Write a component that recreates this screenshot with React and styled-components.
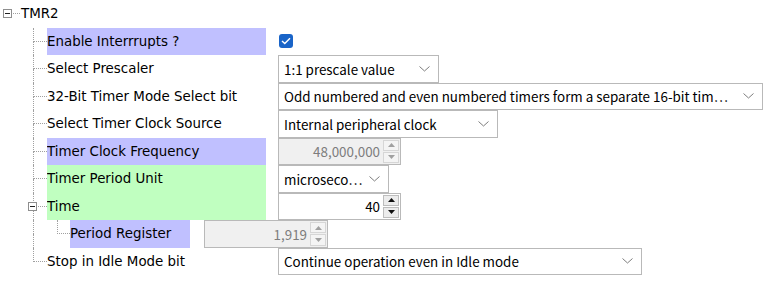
import React from "react";
import styled, { createGlobalStyle } from "styled-components";

const Global = createGlobalStyle`
  html, body { margin: 0; padding: 0; background: #ffffff; }
  body { font-family: "DejaVu Sans", Verdana, sans-serif; }
`;

const BLUE = "#c0c0ff";
const GREEN = "#c0ffc0";
const LINE = "#a0a0a0";

const Tree = styled.div`
  width: 773px;
  height: 294px;
  display: flex;
  flex-direction: column;
`;

const Row = styled.div`
  display: flex;
  height: 27.5px;
  align-items: stretch;
`;

const RootRow = styled(Row)`
  align-items: center;
  padding-left: 3px;
`;

const ExpandBox = styled.span`
  width: 9px;
  height: 9px;
  box-sizing: border-box;
  border: 1px solid #8e8e8e;
  background: #fff;
  display: flex;
  align-items: center;
  justify-content: center;
  flex-shrink: 0;
  &::after {
    content: "";
    width: 5px;
    height: 1px;
    background: #222;
  }
`;

const Dash = styled.span`
  width: 7px;
  height: 0;
  border-top: 1px dotted ${LINE};
  margin: 0 1px;
`;

const RootText = styled.span`
  font-size: 13.4px;
  color: #000;
`;

const Gutter = styled.div`
  display: flex;
  flex-shrink: 0;
  padding-left: 33px;
`;

const Segment = styled.div`
  position: relative;
  width: ${(p) => p.$w}px;
  display: flex;
  flex-direction: column;
`;

const SegTop = styled.div`
  flex: 1;
  border-left: 1px dotted ${LINE};
  border-bottom: ${(p) => (p.$arm ? `1px dotted ${LINE}` : "none")};
`;

const SegBottom = styled.div`
  flex: 1;
  border-left: ${(p) => (p.$open ? `1px dotted ${LINE}` : "1px solid transparent")};
`;

const SegBox = styled(ExpandBox)`
  position: absolute;
  left: -5px;
  top: 9px;
`;

const Label = styled.div`
  width: ${(p) => p.$w}px;
  flex-shrink: 0;
  background: ${(p) => p.$bg || "transparent"};
  display: flex;
  align-items: center;
  font-size: 13.4px;
  color: #000;
  white-space: nowrap;
  overflow: hidden;
`;

const Cell = styled.div`
  margin-left: ${(p) => p.$ml}px;
  display: flex;
  align-items: center;
`;

const SelectBox = styled.div`
  width: ${(p) => p.$w}px;
  height: 27.5px;
  box-sizing: border-box;
  border: 1px solid #b9b9b9;
  background: #fff;
  display: flex;
  align-items: center;
  padding: 0 8px 0 5px;
  font-family: "Noto Sans CJK JP", "Liberation Sans", sans-serif;
  font-size: 13.4px;
  color: #000;
`;

const SelectText = styled.span`
  flex: 1;
  white-space: nowrap;
  overflow: hidden;
`;

const Spin = styled.div`
  width: ${(p) => p.$w}px;
  height: 27.5px;
  box-sizing: border-box;
  border: 1px solid #b9b9b9;
  background: ${(p) => (p.$disabled ? "#f0f0f0" : "#fff")};
  display: flex;
  align-items: stretch;
  font-family: "Noto Sans CJK JP", "Liberation Sans", sans-serif;
  font-size: 13.4px;
  color: ${(p) => (p.$disabled ? "#7d7d7d" : "#000")};
`;

const SpinValue = styled.span`
  flex: 1;
  display: flex;
  align-items: center;
  justify-content: flex-end;
  padding-right: 3px;
`;

const SpinButtons = styled.div`
  width: 16px;
  display: flex;
  flex-direction: column;
  padding: 1px 1px 1px 0;
`;

const SpinBtn = styled.div`
  flex: 1;
  border: 1px solid ${(p) => (p.$disabled ? "#d6d6d6" : "#bdbdbd")};
  background: ${(p) => (p.$disabled ? "#f4f4f4" : "#ececec")};
  display: flex;
  align-items: center;
  justify-content: center;
  & + & { margin-top: 1px; }
`;

const CheckBox = styled.div`
  width: 14px;
  height: 14px;
  border-radius: 3px;
  background: #1964c8;
  margin-left: 1px;
  display: flex;
  align-items: center;
  justify-content: center;
`;

const Chevron = () => (
  <svg width="11" height="6" viewBox="0 0 11 6">
    <path d="M0.5 0.5 L5.5 5 L10.5 0.5" fill="none" stroke="#7e7e7e" strokeWidth="1" />
  </svg>
);

const Tri = ({ up, color }) => (
  <svg width="7" height="4" viewBox="0 0 7 4">
    <path d={up ? "M0 4 L3.5 0 L7 4 Z" : "M0 0 L3.5 4 L7 0 Z"} fill={color} />
  </svg>
);

const Select = ({ w, text }) => (
  <SelectBox $w={w}>
    <SelectText>{text}</SelectText>
    <Chevron />
  </SelectBox>
);

const SpinBox = ({ w, value, disabled }) => {
  const c = disabled ? "#a0a0a0" : "#111";
  return (
    <Spin $w={w} $disabled={disabled}>
      <SpinValue>{value}</SpinValue>
      <SpinButtons>
        <SpinBtn $disabled={disabled}><Tri up color={c} /></SpinBtn>
        <SpinBtn $disabled={disabled}><Tri color={c} /></SpinBtn>
      </SpinButtons>
    </Spin>
  );
};

const Check = () => (
  <CheckBox>
    <svg width="10" height="8" viewBox="0 0 10 8">
      <path d="M1 4 L3.8 6.6 L9 1.2" fill="none" stroke="#fff" strokeWidth="1.4" />
    </svg>
  </CheckBox>
);

const rows = [
  { label: "Enable Interrrupts ?", bg: BLUE, ctrl: <Check /> },
  { label: "Select Prescaler", ctrl: <Select w={161} text="1:1 prescale value" /> },
  {
    label: "32-Bit Timer Mode Select bit",
    ctrl: <Select w={485} text="Odd numbered and even numbered timers form a separate 16-bit tim…" />,
  },
  { label: "Select Timer Clock Source", ctrl: <Select w={220} text="Internal peripheral clock" /> },
  { label: "Timer Clock Frequency", bg: BLUE, ctrl: <SpinBox w={123} value="48,000,000" disabled /> },
  { label: "Timer Period Unit", bg: GREEN, ctrl: <Select w={111} text="microseco…" /> },
  { label: "Time", bg: GREEN, box: true, ctrl: <SpinBox w={123} value="40" /> },
  { child: true, label: "Period Register", bg: BLUE, ctrl: <SpinBox w={124} value="1,919" disabled /> },
  { label: "Stop in Idle Mode bit", last: true, ctrl: <Select w={364} text="Continue operation even in Idle mode" /> },
];

export default function App() {
  return (
    <>
      <Global />
      <Tree>
        <RootRow>
          <ExpandBox />
          <Dash />
          <RootText>TMR2</RootText>
        </RootRow>
        {rows.map((r, i) =>
          r.child ? (
            <Row key={i}>
              <Gutter>
                <Segment $w={24}>
                  <SegTop />
                  <SegBottom $open />
                </Segment>
                <Segment $w={13}>
                  <SegTop $arm />
                  <SegBottom />
                </Segment>
              </Gutter>
              <Label $w={120} $bg={r.bg}>{r.label}</Label>
              <Cell $ml={14}>{r.ctrl}</Cell>
            </Row>
          ) : (
            <Row key={i}>
              <Gutter>
                <Segment $w={14}>
                  <SegTop $arm />
                  <SegBottom $open={!r.last} />
                  {r.box && <SegBox />}
                </Segment>
              </Gutter>
              <Label $w={219} $bg={r.bg}>{r.label}</Label>
              <Cell $ml={12}>{r.ctrl}</Cell>
            </Row>
          )
        )}
      </Tree>
    </>
  );
}
